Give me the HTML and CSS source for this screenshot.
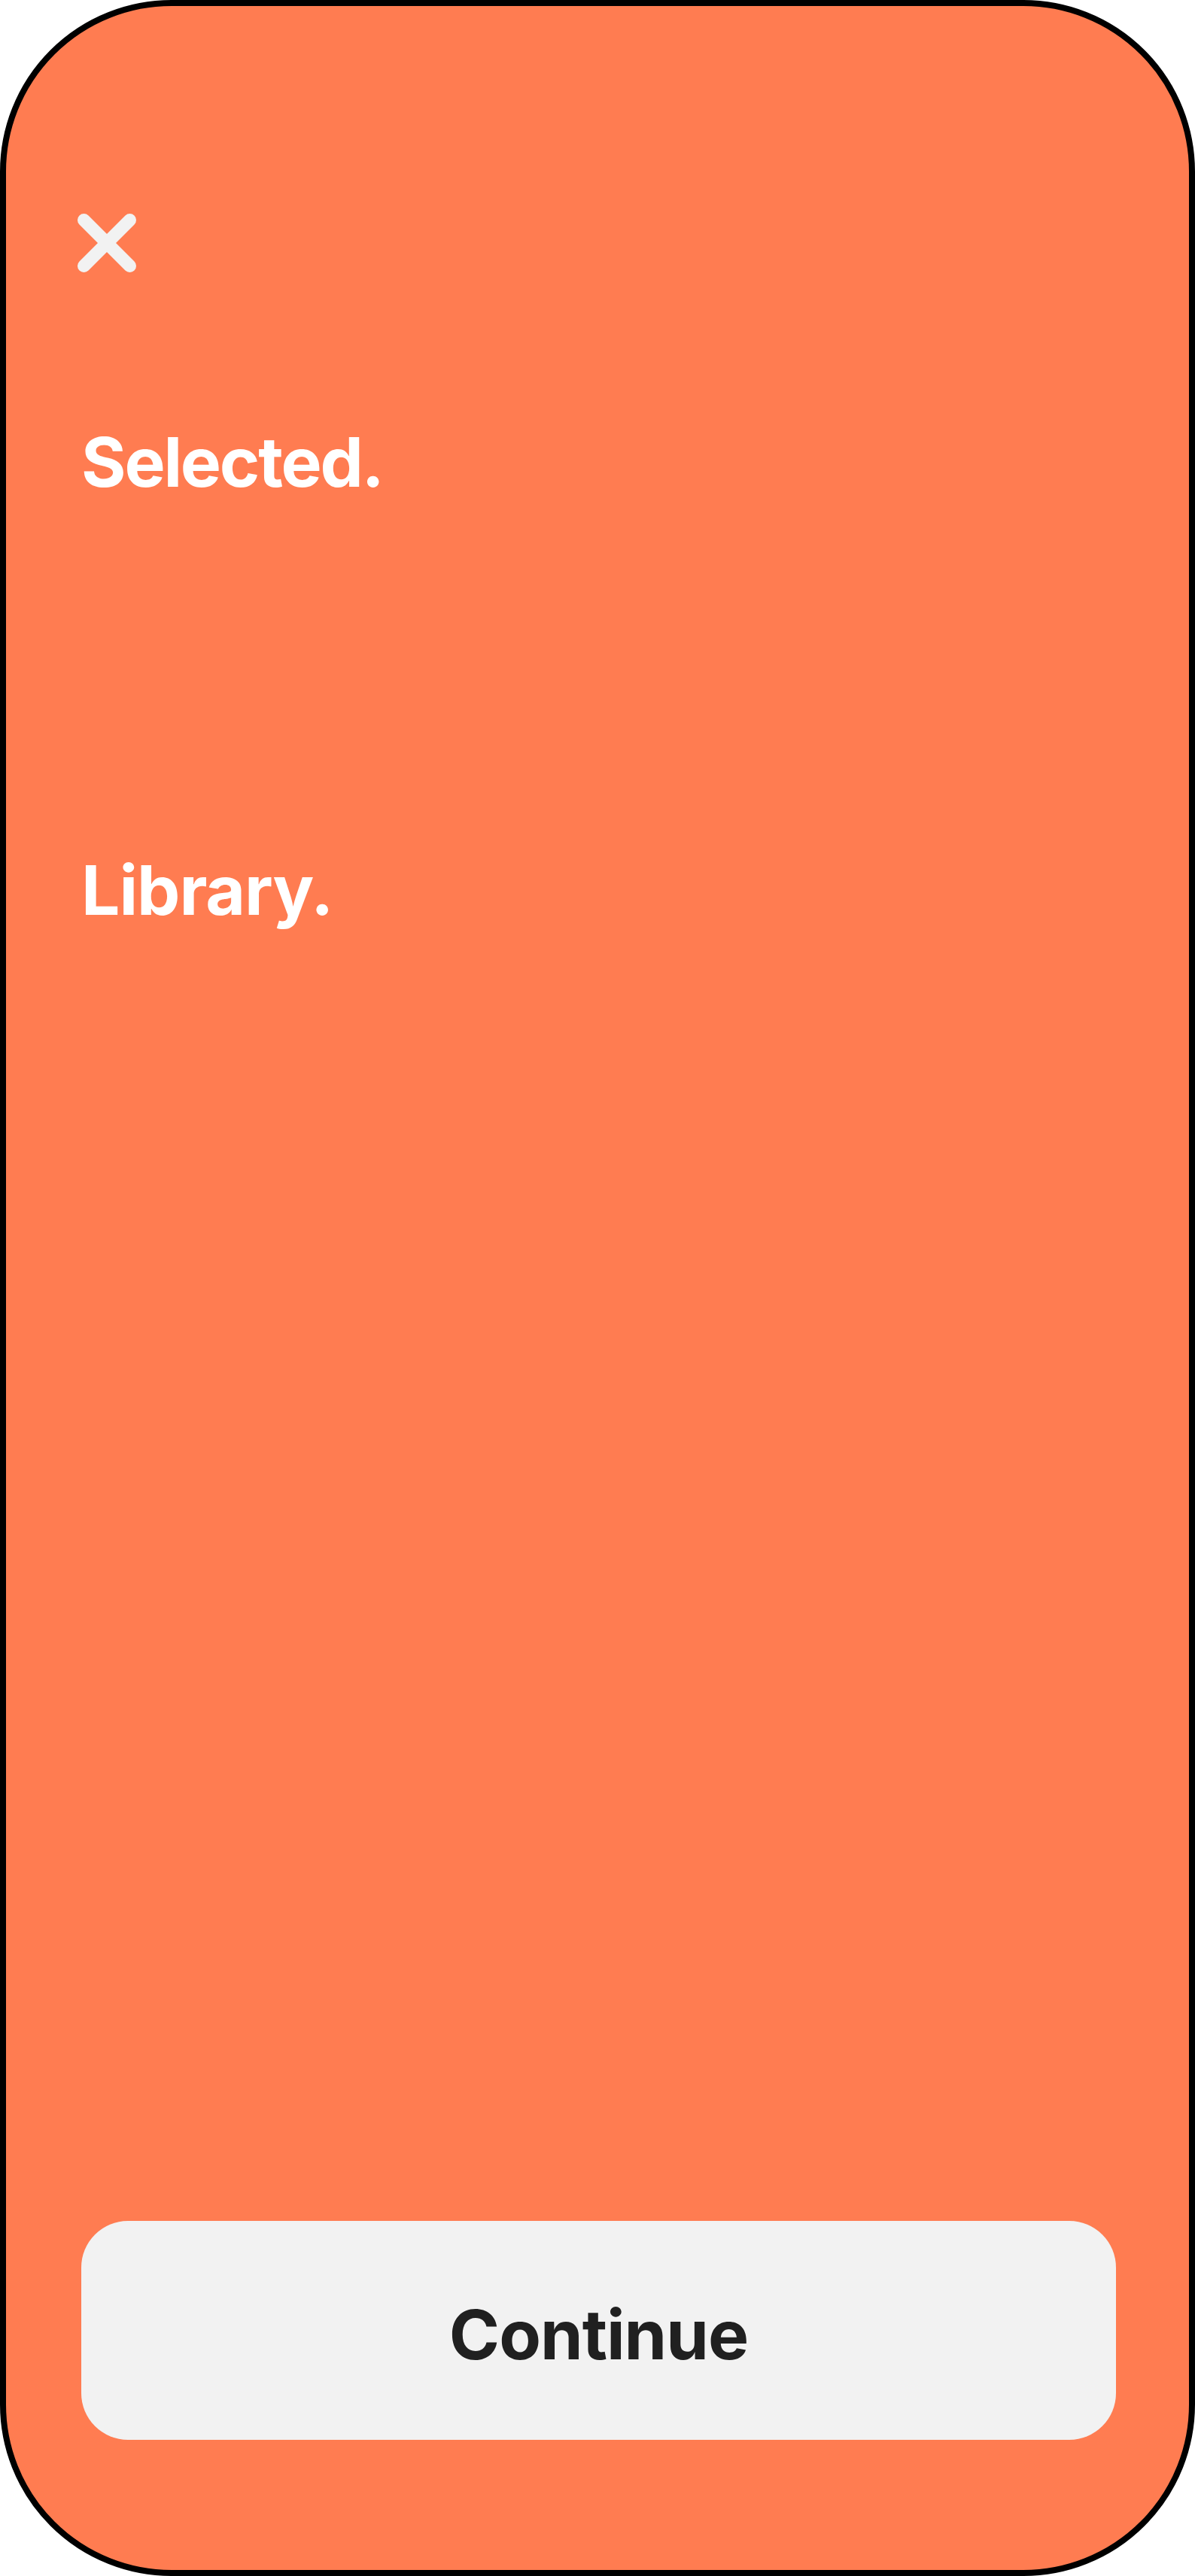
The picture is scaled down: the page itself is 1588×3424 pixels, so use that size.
FILE: index.html
```html
<!DOCTYPE html>
<html lang="en">
<head>
<meta charset="utf-8">
<title>Selected</title>
<link rel="stylesheet" href="styles.css">
</head>
<body>
<div class="frame">
  <button class="close" aria-label="Close">
    <svg width="80" height="80" viewBox="0 0 80 80">
      <line x1="9.5" y1="9.5" x2="70.5" y2="70.5" />
      <line x1="70.5" y1="9.5" x2="9.5" y2="70.5" />
    </svg>
  </button>
  <h1 class="title title-selected">Selected.</h1>
  <h2 class="title title-library">Library.</h2>
  <button class="continue">Continue</button>
</div>
</body>
</html>
```

FILE: styles.css
```css
html, body {
  margin: 0;
  padding: 0;
  background: #ffffff;
}

.frame {
  box-sizing: border-box;
  width: 1588px;
  height: 3424px;
  border: 8px solid #000000;
  border-radius: 228px;
  background: #ff7c51;
  display: flex;
  flex-direction: column;
  align-items: flex-start;
  padding: 0 97px 173px 100px;
}

.close {
  margin: 275px 0 0 -6px;
  padding: 0;
  border: 0;
  background: transparent;
  width: 80px;
  height: 80px;
  display: block;
}

.close svg {
  display: block;
}

.close line {
  stroke: #f2f2f2;
  stroke-width: 17;
  stroke-linecap: round;
}

.title {
  margin: 0;
  font-family: "Inter", "Liberation Sans", sans-serif;
  font-weight: 700;
  font-size: 91px;
  line-height: 110px;
  color: #ffffff;
  letter-spacing: -1px;
}

.title-selected {
  margin-top: 196px;
  letter-spacing: -2.2px;
}

.title-library {
  margin-top: 459px;
}

.continue {
  margin-top: auto;
  align-self: stretch;
  height: 291px;
  border: 0;
  border-radius: 62px;
  background: #f2f2f2;
  color: #202020;
  font-family: "Inter", "Liberation Sans", sans-serif;
  font-weight: 700;
  font-size: 91px;
  line-height: 110px;
  letter-spacing: -1px;
  padding: 11px 0 0 0;
  display: flex;
  align-items: center;
  justify-content: center;
}
```
